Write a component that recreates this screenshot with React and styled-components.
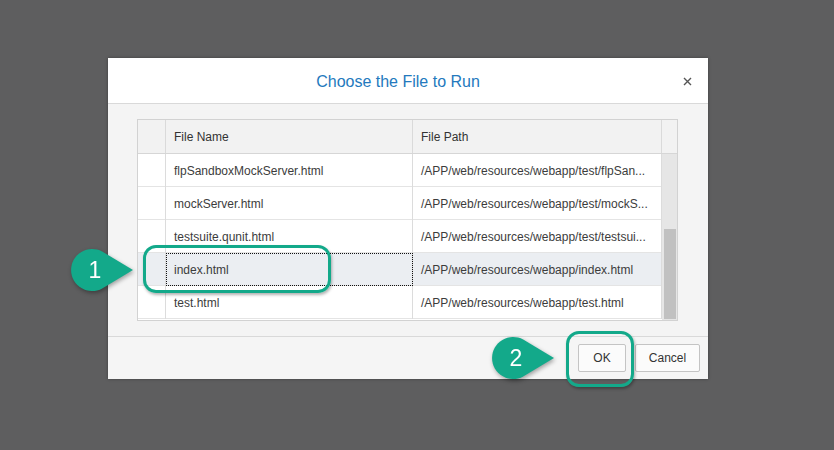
import React from 'react';
import styled, { createGlobalStyle } from 'styled-components';

const GlobalStyle = createGlobalStyle`
  body {
    margin: 0;
    background: #5e5e5f;
    font-family: "Liberation Sans", Arial, sans-serif;
  }
`;

// paths are shown already shortened, as the grid shows them
const files = [
  { name: 'flpSandboxMockServer.html', path: '/APP/web/resources/webapp/test/flpSan...' },
  { name: 'mockServer.html', path: '/APP/web/resources/webapp/test/mockS...' },
  { name: 'testsuite.qunit.html', path: '/APP/web/resources/webapp/test/testsui...' },
  { name: 'index.html', path: '/APP/web/resources/webapp/index.html', selected: true },
  { name: 'test.html', path: '/APP/web/resources/webapp/test.html' },
];

const GREEN = '#13a98a';

function Bubble({ x, y, label }) {
  // teardrop: circle r=21 at (22,22), tip at (63,22)
  return (
    <BubbleWrap $x={x} $y={y}>
      <svg width="66" height="46" viewBox="0 0 66 46">
        <path d="M63 22 L32.2 3.6 A21 21 0 1 0 32.2 40.4 Z" fill={GREEN} />
      </svg>
      <BubbleLabel>{label}</BubbleLabel>
    </BubbleWrap>
  );
}

export default function App() {
  return (
    <Stage>
      <GlobalStyle />
      <Dialog>
        <Header>
          <span />
          <Title>Choose the File to Run</Title>
          <CloseButton>
            <svg width="9" height="9" viewBox="0 0 9 9">
              <path d="M1 1 L8 8 M8 1 L1 8" stroke="#555" strokeWidth="1.4" />
            </svg>
          </CloseButton>
        </Header>
        <Body>
          <Table>
            <HeadRow>
              <HeadCell />
              <HeadCell>File Name</HeadCell>
              <HeadCell>File Path</HeadCell>
              <HeadCell $last />
            </HeadRow>
            <BodyWrap>
              <Rows>
                {files.map((f) => (
                  <Row key={f.name} $selected={f.selected}>
                    <Cell />
                    <Cell $focus={f.selected}>{f.name}</Cell>
                    <Cell>{f.path}</Cell>
                  </Row>
                ))}
              </Rows>
              <ScrollTrack>
                <ScrollThumb />
              </ScrollTrack>
            </BodyWrap>
          </Table>
        </Body>
        <Footer>
          <Button $width={48}>OK</Button>
          <Button $width={65}>Cancel</Button>
        </Footer>
      </Dialog>

      <Ring $x={143} $y={245} $w={188} $h={48} />
      <Ring $x={566} $y={331} $w={68} $h={56} />
      <Bubble x={70} y={248} label="1" />
      <Bubble x={491} y={336} label="2" />
    </Stage>
  );
}

const Stage = styled.div`
  position: relative;
  width: 834px;
  height: 450px;
  box-sizing: border-box;
  padding: 58px 0 0 108px;
  overflow: hidden;
`;

const Dialog = styled.div`
  width: 600px;
  background: #fff;
  box-shadow: 0 0 3px rgba(0, 0, 0, 0.35);
`;

const Header = styled.div`
  display: grid;
  grid-template-columns: 20px 1fr 40px;
  align-items: center;
  height: 45px;
  border-bottom: 1px solid #d9d9d9;
`;

const Title = styled.div`
  text-align: center;
  font-size: 16px;
  color: #2479bd;
  padding-top: 2px;
`;

const CloseButton = styled.div`
  display: flex;
  justify-content: center;
  align-items: center;
  padding: 2px 2px 0 0;
`;

const Body = styled.div`
  background: #f4f4f4;
  padding: 15px 30px 15px 29px;
`;

const Table = styled.div`
  width: 541px;
  border: 1px solid #d2d2d2;
  box-sizing: border-box;
  background: #fff;
  color: #3c3c3c;
  font-size: 12px;
`;

const HeadRow = styled.div`
  display: grid;
  grid-template-columns: 28px 247px 249px 1fr;
  height: 34px;
  background: #f2f2f2;
  border-bottom: 1px solid #d6d6d6;
  box-sizing: border-box;
  color: #333;
`;

const HeadCell = styled.div`
  display: flex;
  align-items: center;
  padding: 1px 8px 0;
  border-right: ${(p) => (p.$last ? 'none' : '1px solid #dadada')};
`;

const BodyWrap = styled.div`
  display: flex;
  height: 166px;
`;

const Rows = styled.div`
  flex: none;
  width: 524px;
`;

const Row = styled.div`
  display: grid;
  grid-template-columns: 28px 247px 249px;
  height: 33px;
  box-sizing: border-box;
  border-bottom: 1px solid #e4e4e4;
  background: ${(p) => (p.$selected ? '#ebeef2' : '#fff')};
`;

const Cell = styled.div`
  padding: 1px 8px 0;
  min-width: 0;
  border-right: 1px solid #dcdcdc;
  outline: ${(p) => (p.$focus ? '1px dotted #111' : 'none')};
  outline-offset: -1px;
  white-space: nowrap;
  line-height: 32px;
`;

const ScrollTrack = styled.div`
  flex: 1;
  display: flex;
  flex-direction: column;
  justify-content: flex-end;
  background: #e6e6e6;
  padding: 0 1px 1px 2px;
`;

const ScrollThumb = styled.div`
  height: 90px;
  background: #c1c1c1;
`;

const Footer = styled.div`
  display: flex;
  justify-content: flex-end;
  gap: 9px;
  padding: 7px 8px;
  background: #f5f5f5;
  border-top: 1px solid #d9d9d9;
`;

const Button = styled.div`
  width: ${(p) => p.$width}px;
  height: 28px;
  box-sizing: border-box;
  display: flex;
  align-items: center;
  justify-content: center;
  border: 1px solid #c4c4c4;
  border-radius: 2px;
  background: #fbfbfb;
  color: #333;
  font-size: 12px;
`;

const Ring = styled.div`
  position: absolute;
  left: ${(p) => p.$x}px;
  top: ${(p) => p.$y}px;
  width: ${(p) => p.$w}px;
  height: ${(p) => p.$h}px;
  box-sizing: border-box;
  border: 3px solid ${GREEN};
  border-radius: 13px;
  box-shadow: 1px 2px 3px rgba(0, 0, 0, 0.3);
`;

const BubbleWrap = styled.div`
  position: absolute;
  left: ${(p) => p.$x}px;
  top: ${(p) => p.$y}px;
  width: 66px;
  height: 46px;
  filter: drop-shadow(1px 2px 2px rgba(0, 0, 0, 0.35));
  svg {
    display: block;
  }
`;

const BubbleLabel = styled.div`
  position: absolute;
  left: 3px;
  top: 0;
  width: 44px;
  height: 44px;
  display: flex;
  align-items: center;
  justify-content: center;
  color: #fff;
  font-size: 23px;
`;
